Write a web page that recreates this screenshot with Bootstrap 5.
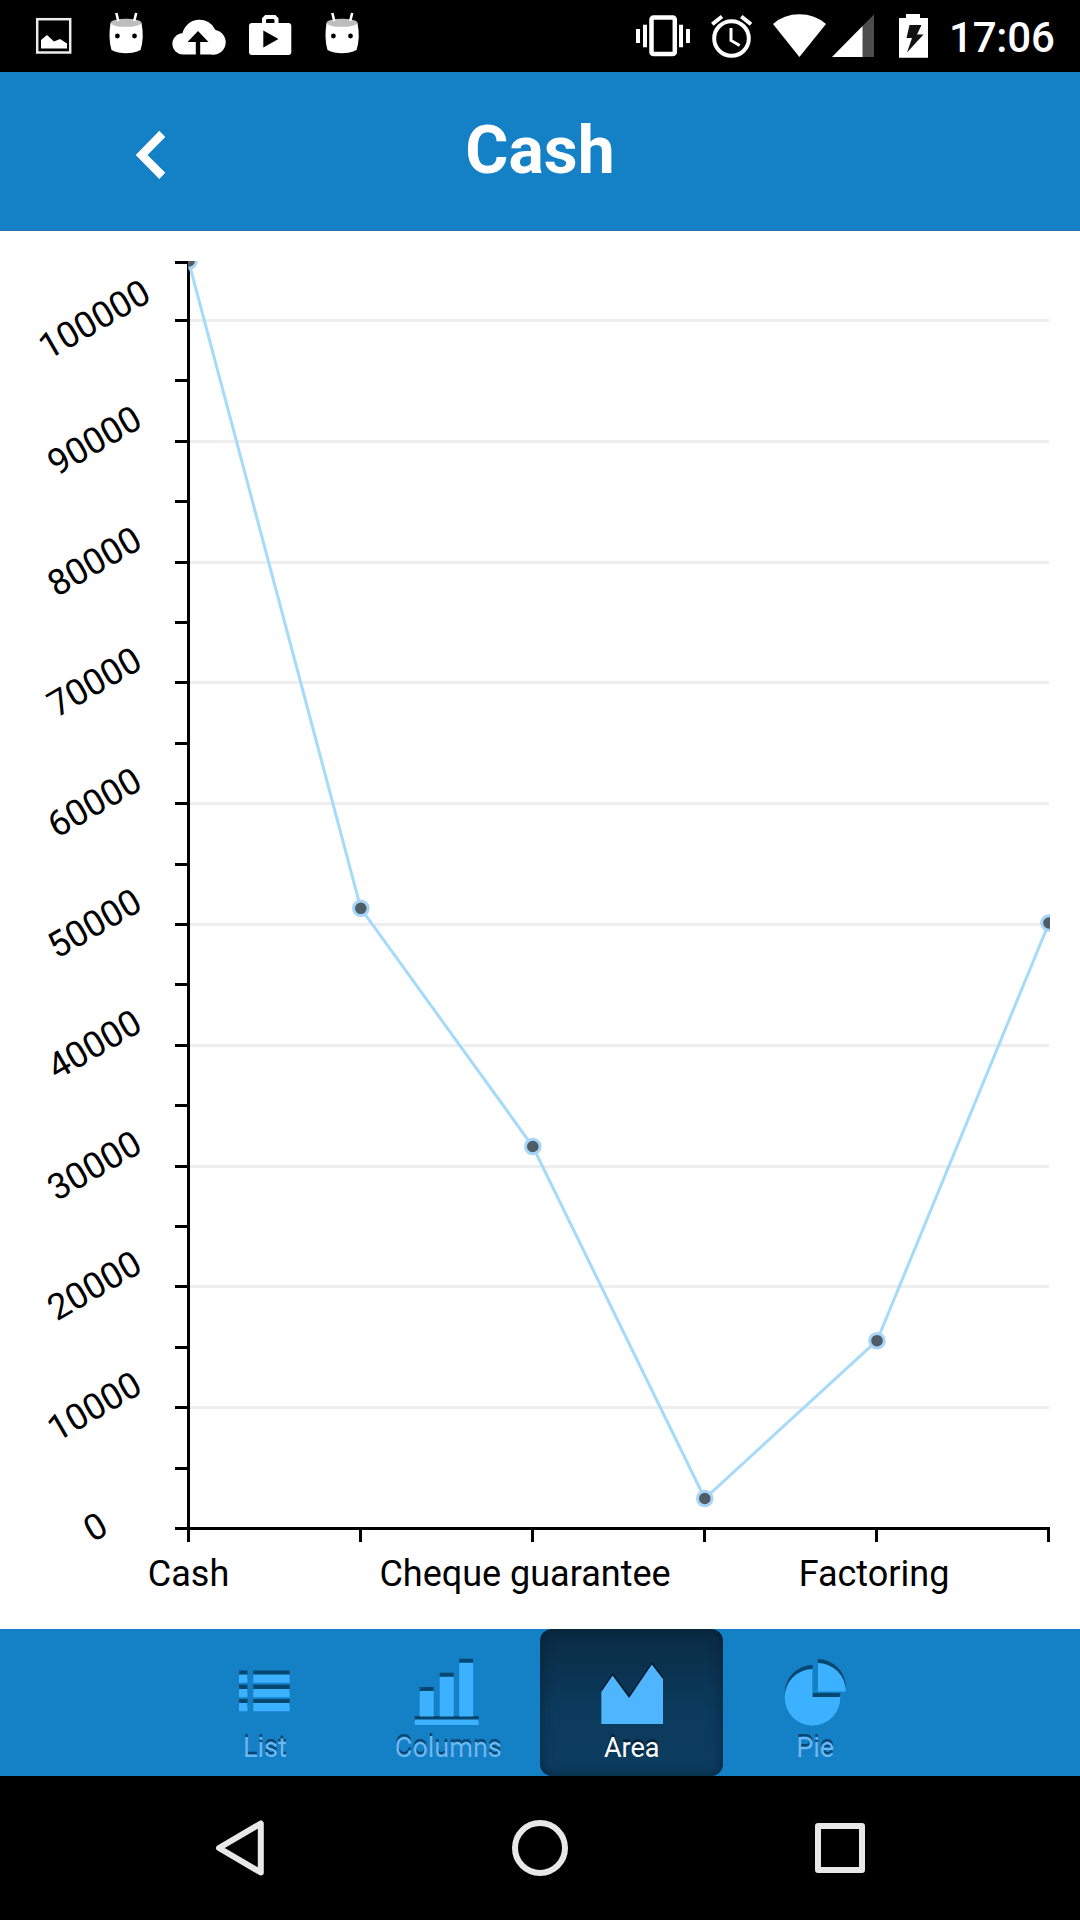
<!DOCTYPE html>
<html lang="en">
<head>
<meta charset="utf-8">
<meta name="viewport" content="width=device-width, initial-scale=1">
<title>Cash</title>
<link href="https://cdn.jsdelivr.net/npm/bootstrap@5.3.0/dist/css/bootstrap.min.css" rel="stylesheet">
<style>
body { font-family: Roboto, "Liberation Sans", sans-serif; width: 1080px; height: 1920px; overflow: hidden; }
svg { display: block; flex: none; }
.status-bar { height: 72px; background: #000; padding-left: 18px; }
.clock { font-size: 42px; font-weight: 500; line-height: 72px; letter-spacing: -.2px; padding-top: 2px; width: 137px; padding-left: 6px; color: #fff; white-space: nowrap; }
.title-bar { height: 159px; background: #1481c7; border-bottom: 1px solid #2c74ab; }
.title-bar h1 { font-size: 66px; font-weight: 700; line-height: 78px; margin: 0; padding-top: 40px; width: 540px; color: #fff; }
.back-btn, .side { width: 270px; }
.chart-area { height: 1398px; }
.chart-area text { font-size: 36px; fill: #000; text-anchor: middle; }
.tab-strip { height: 147px; background: #1481c7; padding: 0; }
.tab-item { width: 183.4px; height: 147px; border-radius: 12px; color: #6db8f2; font-size: 27px; line-height: 33px; text-align: center; text-shadow: 0 -3px 0 #05456f; text-decoration: none; }
.tab-item.selected { color: #fff; background: linear-gradient(#0a2b44, #0b3a5c 55%, #0c3c5f); box-shadow: inset 0 0 12px rgba(0,20,35,.55); text-shadow: 0 -3px 0 #082336; }
.sys-nav { height: 144px; background: #000; }
</style>
<script src="https://cdn.jsdelivr.net/npm/bootstrap@5.3.0/dist/js/bootstrap.bundle.min.js"></script>
</head>
<body class="d-flex flex-column bg-white m-0">
<div class="status-bar d-flex justify-content-between">
  <div class="d-flex">
    <svg width="72" height="72" viewBox="18 0 72 72"><rect x="37.200" y="19.200" width="33" height="33.300" fill="none" stroke="#ececec" stroke-width="2.500"/><path d="M41 48.500V40l6-5 7 6.500 6-2.500 7 4.500v5z" fill="#fff"/></svg>
    <svg width="72" height="72" viewBox="90 0 72 72"><g id="droid"><path d="M110.500 23Q108 38 111.500 50Q118 53.300 126 53.300T140.500 50Q144.500 38 141.500 23Z" fill="#fff"/><ellipse cx="126" cy="22.800" rx="15.500" ry="4" fill="#bdbdbd"/><path d="M116.300 13l2 8M136.200 13l-2 8" stroke="#fff" stroke-width="2.600"/><circle cx="117.400" cy="36" r="2.400"/><circle cx="134.500" cy="36" r="2.400"/></g></svg>
    <svg width="72" height="72" viewBox="162 0 72 72"><path d="M183.500 54.500a10.500 10.500 0 0 1-1-21.300a17.500 17.500 0 0 1 33-3.200a12.300 12.300 0 0 1-4.500 24.500z" fill="#fff"/><path d="M198 31l-10.500 11h8.300v13h4.400V42h8.300z"/></svg>
    <svg width="72" height="72" viewBox="234 0 72 72"><rect x="249" y="23" width="42.300" height="32" rx="3" fill="#fff"/><path d="M264 23v-4l2-2h8.500l2 2v4" fill="none" stroke="#fff" stroke-width="4"/><path d="M263.300 30.500v17l15.200-8.500z"/></svg>
    <svg width="72" height="72" viewBox="90 0 72 72"><use href="#droid"/></svg>
  </div>
  <div class="d-flex">
    <svg width="72" height="72" viewBox="627 0 72 72"><rect x="651.500" y="17.500" width="23.300" height="36.500" rx="2" fill="none" stroke="#fff" stroke-width="4.500"/><path d="M636 29h4v14h-4zM643 24.800h4v22.500h-4zM679 24.800h4v22.500h-4zM686 29h4v14h-4z" fill="#fff"/></svg>
    <svg width="64" height="72" viewBox="699 0 64 72"><g fill="none" stroke="#fff" stroke-width="4"><circle cx="731.500" cy="38.500" r="17.300"/><path d="M712.300 24.300l9.700-7.800M751 24.300l-9.700-7.800"/><path d="M731 28v12.500l8.700 5" stroke-width="3"/></g></svg>
    <svg width="66" height="72" viewBox="763 0 66 72"><path d="M799.400 57L773 24Q784 14.300 799.400 14.300T826 24Z" fill="#fff"/></svg>
    <svg width="52" height="72" viewBox="829 0 52 72"><path d="M874 14.500V57h-12V26.500z" fill="#4d4d4d"/><path d="M832 57l30.500-31v31z" fill="#fff"/></svg>
    <svg width="62" height="72" viewBox="881 0 62 72"><path d="M899 18h7v-4h14v4h8v39.700h-29z" fill="#fff"/><path d="M909.500 25h12l-4.500 9.500h6.500l-16.500 18 5-14.500h-5.500z" fill="#111"/></svg>
    <div class="clock">17:06</div>
  </div>
</div>

<header class="title-bar d-flex">
  <a class="back-btn" href="#" aria-label="Back"><svg width="270" height="158" viewBox="0 72 270 158"><path d="M135.700 155l23.600-24.200 6 6.200L147.500 155l17.800 17.800-6 6.200z" fill="#fff"/></svg></a>
  <h1 class="text-center">Cash</h1>
  <div class="side"></div>
</header>

<main class="chart-area">
<svg width="1080" height="1398" viewBox="0 231 1080 1398">
  <defs><clipPath id="plot"><rect x="188.500" y="261" width="861.500" height="1268"/></clipPath></defs>
  <path d="M190 320.500h859M190 441.500h859M190 562.500h859M190 682.500h859M190 803.500h859M190 924.500h859M190 1045.500h859M190 1166.500h859M190 1286.500h859M190 1407.500h859" stroke="#eee" stroke-width="3"/>
  <path d="M188.500 261V1542M175 262.500h13M175 320.500h13M175 380.500h13M175 441.500h13M175 501.500h13M175 562.500h13M175 622.500h13M175 682.500h13M175 743.500h13M175 803.500h13M175 864.500h13M175 924.500h13M175 984.500h13M175 1045.500h13M175 1105.500h13M175 1166.500h13M175 1226.500h13M175 1286.500h13M175 1347.500h13M175 1407.500h13M175 1468.500h13M175 1528.500H1050M360.500 1528v14M532.500 1528v14M704.500 1528v14M876.500 1528v14M1048.500 1528v14" fill="none" stroke="#000" stroke-width="3"/>
  <g clip-path="url(#plot)">
    <path d="M188.500 261L360.800 908.300 532.800 1146.500 704.800 1498.500 877 1340.700 1049 923" fill="none" stroke="#a6dafa" stroke-width="3"/>
    <g fill="#505c66" stroke="#a6d5f7" stroke-width="3">
      <circle cx="189" cy="261" r="7.300"/><circle cx="360.800" cy="908.300" r="7.300"/><circle cx="532.800" cy="1146.500" r="7.300"/><circle cx="704.800" cy="1498.500" r="7.300"/><circle cx="877" cy="1340.700" r="7.300"/><circle cx="1049" cy="923" r="7.300"/>
    </g>
  </g>
  <g>
    <text transform="translate(94 319) rotate(-30)" y="13">100000</text>
    <text transform="translate(94 440) rotate(-30)" y="13">90000</text>
    <text transform="translate(94 561) rotate(-30)" y="13">80000</text>
    <text transform="translate(94 681.500) rotate(-30)" y="13">70000</text>
    <text transform="translate(94 802) rotate(-30)" y="13">60000</text>
    <text transform="translate(94 923) rotate(-30)" y="13">50000</text>
    <text transform="translate(94 1044) rotate(-30)" y="13">40000</text>
    <text transform="translate(94 1165) rotate(-30)" y="13">30000</text>
    <text transform="translate(94 1285) rotate(-30)" y="13">20000</text>
    <text transform="translate(94 1406) rotate(-30)" y="13">10000</text>
    <text transform="translate(95 1526.500) rotate(-30)" y="13">0</text>
  </g>
  <text x="188.500" y="1586">Cash</text>
  <text x="525" y="1586">Cheque guarantee</text>
  <text x="874" y="1586">Factoring</text>
</svg>
</main>

<nav class="tab-strip d-flex justify-content-center">
  <a class="tab-item d-flex flex-column align-items-center" href="#">
    <svg width="184" height="103" viewBox="173.300 1629 184 103"><path d="M239.300 1670.500h8.500v8h-8.500zM253.500 1670.500h36.500v8h-36.500zM239.300 1684.700h8.500v8h-8.500zM253.500 1684.700h36.500v8h-36.500zM239.300 1699h8.500v8h-8.500zM253.500 1699h36.500v8h-36.500z" fill="#05476f"/><path d="M239.300 1674.500h8.500v8.300h-8.500zM253.500 1674.500h36.500v8.300h-36.500zM239.300 1689h8.500v8.300h-8.500zM253.500 1689h36.500v8.300h-36.500zM239.300 1703h8.500v8.300h-8.500zM253.500 1703h36.500v8.300h-36.500z" fill="#3bb1ff"/></svg>
    <span>List</span></a>
  <a class="tab-item d-flex flex-column align-items-center" href="#">
    <svg width="184" height="103" viewBox="356.300 1629 184 103"><path d="M415 1716h64v5h-64zM420 1687h14v5h-14zM440 1672.700h14v5h-14zM459.500 1658.700h14v5h-14z" fill="#05476f"/><path d="M415 1719.500h64v5.500h-64zM420 1691h14v25.500h-14zM440 1676.700h14v39.800h-14zM459.500 1662.800h14v53.700h-14z" fill="#3bb1ff"/></svg>
    <span>Columns</span></a>
  <a class="tab-item selected d-flex flex-column align-items-center" href="#">
    <svg width="184" height="103" viewBox="539.700 1629 184 103"><path id="area-shape" d="M601 1724v-32l11.300-16.500 16.500 22.500 22.700-33.500 11.200 14.500v45z" transform="translate(0 -2.500)" fill="#041a2b"/><path d="M601 1724v-32l11.300-16.500 16.500 22.500 22.700-33.500 11.200 14.500v45z" fill="#50b5ff"/></svg>
    <span>Area</span></a>
  <a class="tab-item d-flex flex-column align-items-center" href="#">
    <svg width="184" height="103" viewBox="723.200 1629 184 103"><g transform="translate(0 -4)" fill="#05476f"><path d="M812.800 1669v28H840.500A27.800 28.300 0 1 1 812.800 1669z"/><path d="M818 1663a28 28.500 0 0 1 28 28.500h-28z"/></g><g fill="#3bb1ff"><path d="M812.800 1669v28H840.500A27.800 28.300 0 1 1 812.800 1669z"/><path d="M818 1663a28 28.500 0 0 1 28 28.500h-28z"/></g></svg>
    <span>Pie</span></a>
</nav>

<footer class="sys-nav">
  <svg width="1080" height="144" viewBox="0 1776 1080 144"><g fill="none" stroke="#e8e8e8" stroke-width="6" stroke-linejoin="round"><path d="M219 1848L260.800 1823.500v49z"/><circle cx="540" cy="1848" r="25"/><rect x="818" y="1826" width="44" height="44"/></g></svg>
</footer>
</body>
</html>
